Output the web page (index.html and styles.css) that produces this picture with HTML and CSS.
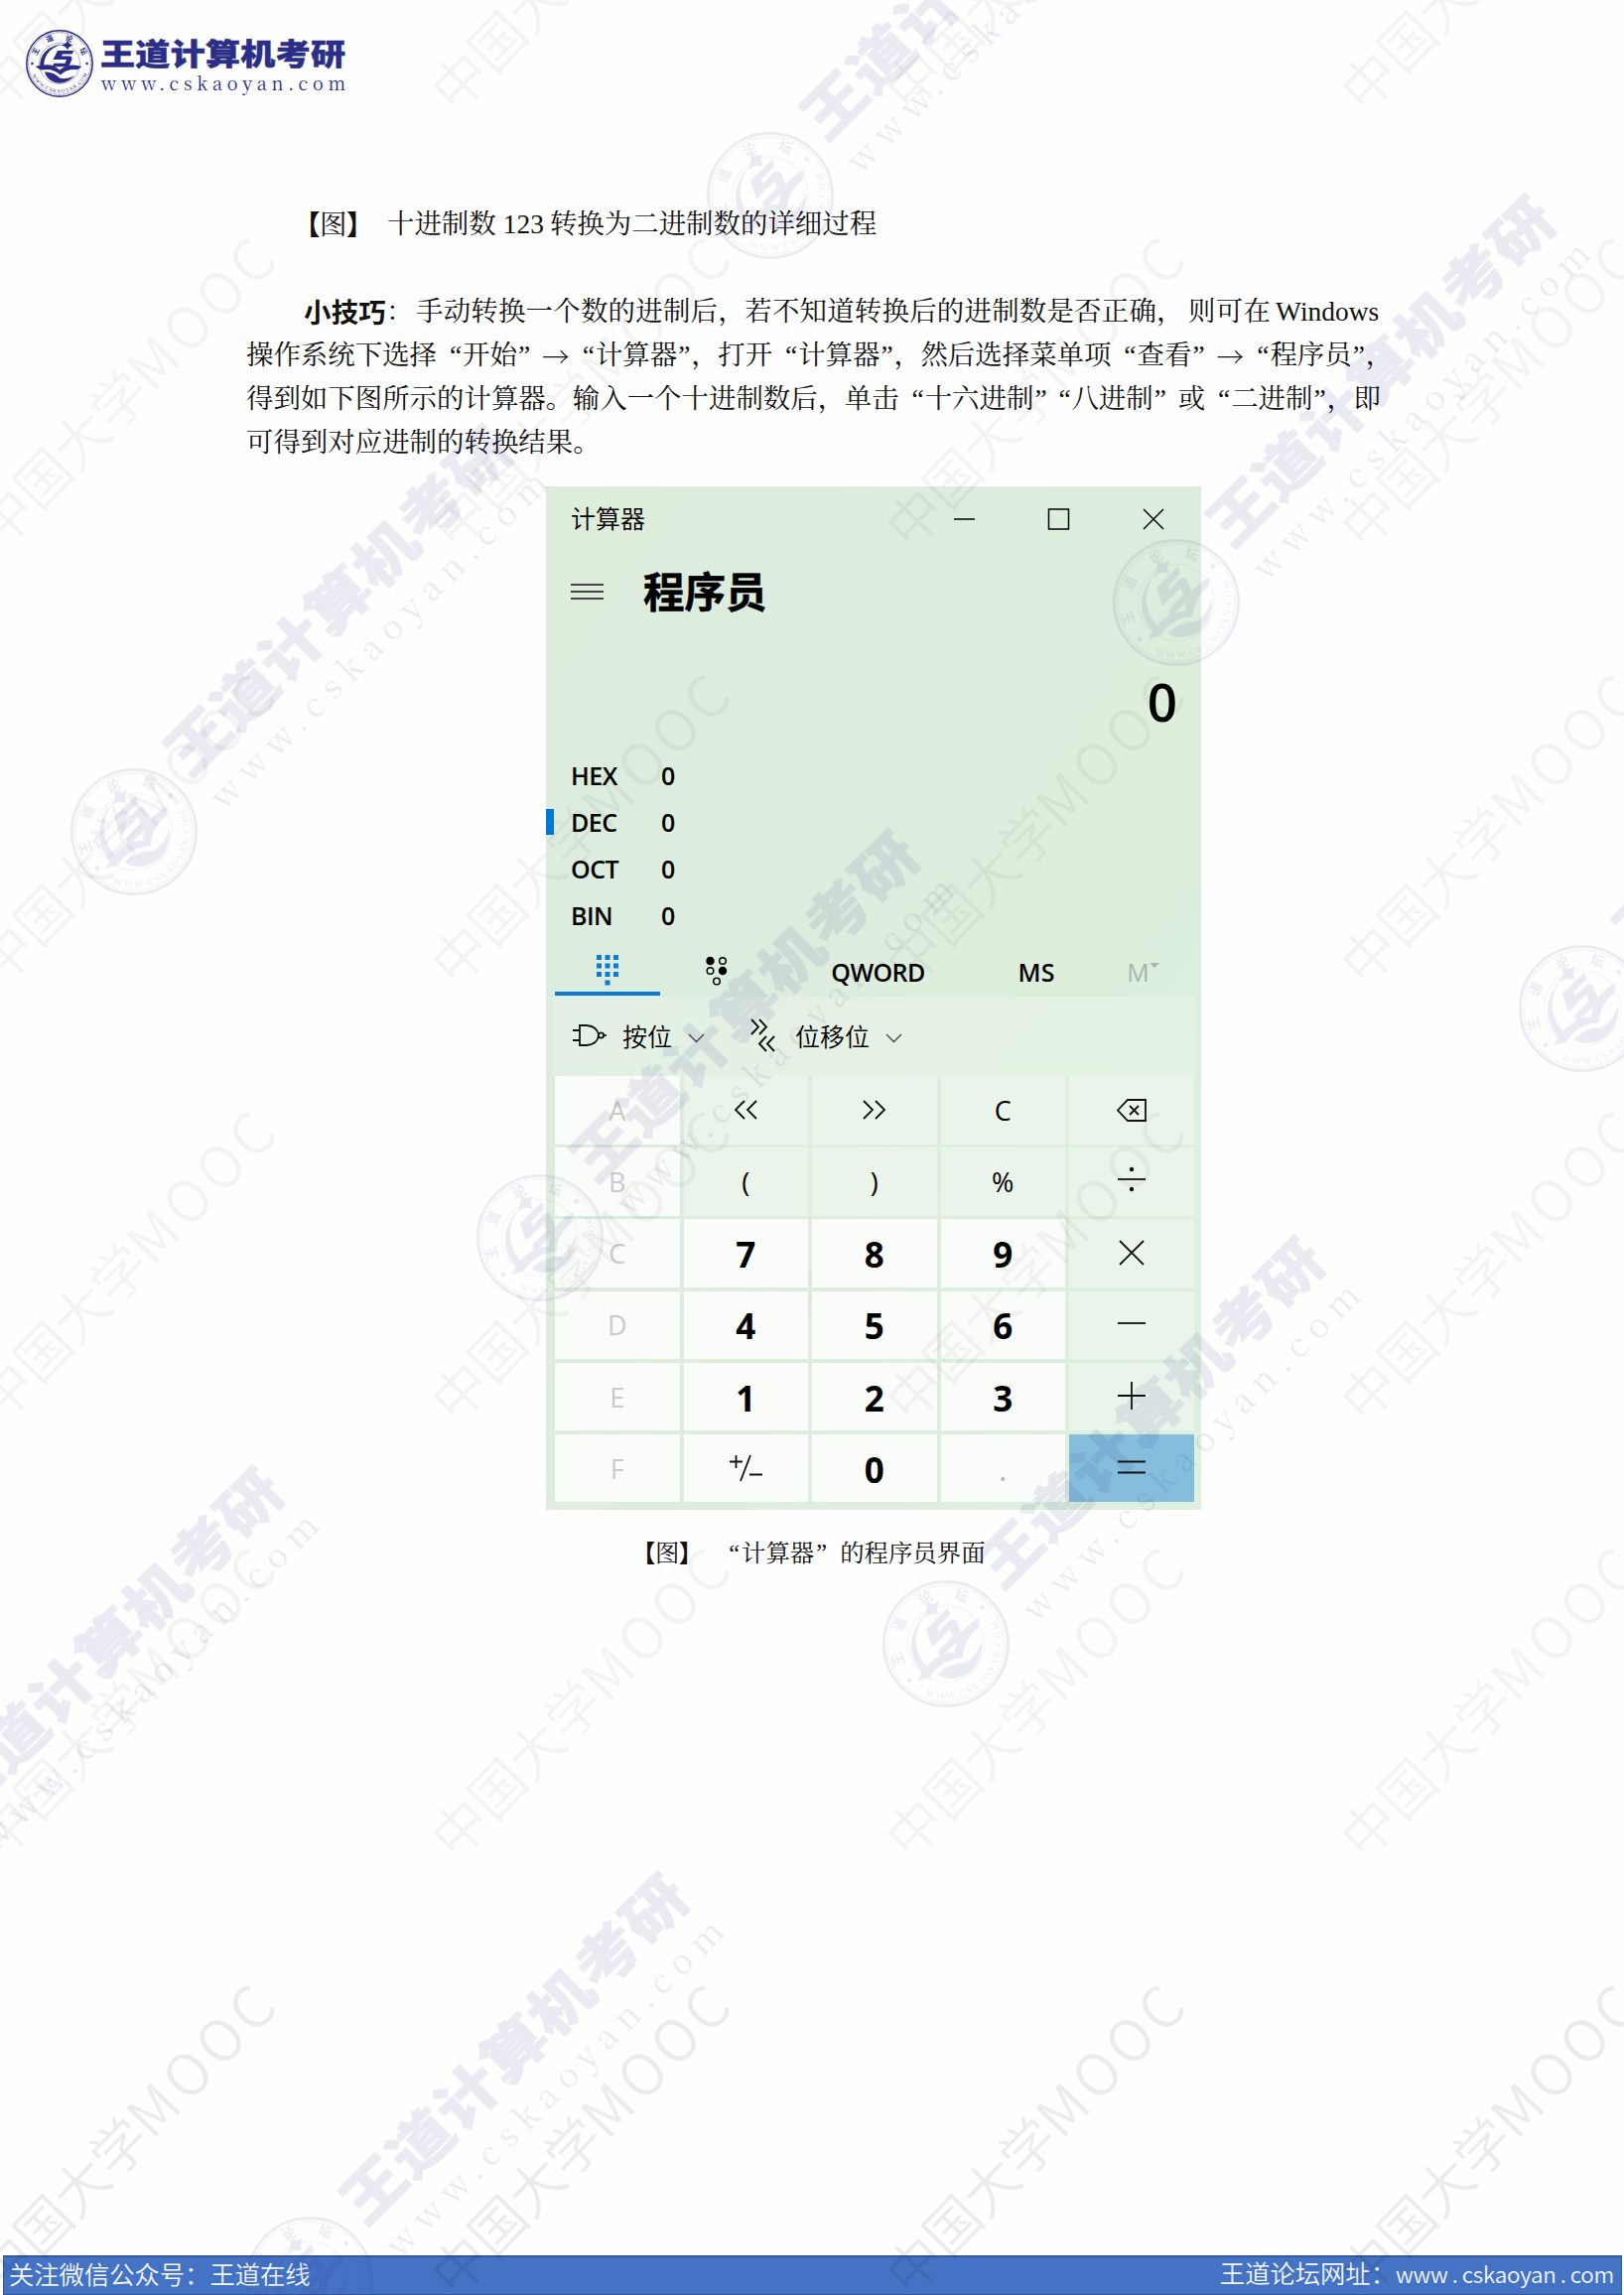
FILE: index.html
```html
<!DOCTYPE html>
<html lang="zh-CN">
<head>
<meta charset="utf-8">
<title>王道计算机考研</title>
<link rel="stylesheet" href="styles.css">
</head>
<body>
<div class="page">
  <header class="brand">
    <svg width="340" height="80" viewBox="-40 -40 340 80" aria-label="王道计算机考研">
      <defs>
        <path id="rim" d="M-29.5 5A30 30 0 0 0 29.5 5"/>
        <g id="logo" fill="#2b2e86">
          <circle r="33.2" fill="none" stroke="#2b2e86" stroke-width="1.5"/>
          <circle r="31.3" fill="none" stroke="#2b2e86" stroke-width=".9" stroke-dasharray=".6 .7"/>
          <circle r="20.5" fill="none" stroke="#2b2e86" stroke-width=".35"/>
          <circle cx="-27.6" r="1.3"/><circle cx="27.6" r="1.3"/>
          <path d="M8-23.500Q9-19.500 13.500-18.500Q9-17.500 8-13.500Q7-17.500 1-18.500Q7-19.500 8-23.500Z"/>
          <path d="M2-19C-13-18-21-7-19.5 4L-15.500 5C-17-6-11-16 2-19Z"/>
          <path d="M-2-13H14.500L12.500-9.500H3L1.800-7.500H9.500Q13.500-7.500 12.300-4L10.500 .5Q9.500 3.300 6 3.300H-7.500L-5.500-.3H5.500L7-4H-6.500Z"/>
          <path d="M-24.500 3Q-8-2 0 6.500Q9-1.500 22.500 3L18 6.200Q8 5 1 11.500Q-7 4-19 6.500Z"/>
          <path d="M-15 8.500Q-6 8 0 14.500Q6 16.500 15 12.500Q6 22-5 19Q-13 16-15 8.500Z"/>
          <g class="rim-text" text-anchor="middle">
            <text transform="rotate(-63) translate(0 -24.300)">王</text>
            <text transform="rotate(-22) translate(0 -24.300)">道</text>
            <text transform="rotate(21) translate(0 -24.300)">论</text>
            <text transform="rotate(63) translate(0 -24.300)">坛</text>
          </g>
          <text class="rim-url"><textPath href="#rim" startOffset="7" textLength="70">WWW.CSKAOYAN.COM</textPath></text>
          <text class="logo-name" transform="translate(41 1.200) scale(1 .86)" textLength="247" stroke="#2b2e86" stroke-width=".6">王道计算机考研</text>
          <text class="logo-url" x="42" y="26.500" textLength="246">www.cskaoyan.com</text>
        </g>
        <text id="mooc" class="mooc" x="-27" y="20"><tspan>中国大学</tspan><tspan class="latin">MOOC</tspan></text>
      </defs>
      <use href="#logo"/>
    </svg>
  </header>

  <main>
    <h1 class="figure-title"><span class="tag"><b>【</b>图<b>】</b></span><span class="gap-a">十进制数</span><span class="num">123</span><span>转换为二进制数的详细过程</span></h1>

    <div class="tip">
      <p class="line first"><b>小技巧</b><i class="wide">：</i>手动转换一个数的进制后<i>，</i>若不知道转换后的进制数是否正确<i class="loose">，</i>则可在<span class="win">Windows</span></p>
      <p class="line">操作系统下选择<i class="lq">“</i>开始<i class="rq">”</i><i class="arrow">→</i><i class="lq">“</i>计算器<i class="rq near">”</i><i>，</i>打开<i class="lq slim">“</i>计算器<i class="rq near">”</i><i>，</i>然后选择菜单项<i class="lq">“</i>查看<i class="rq">”</i><i class="arrow">→</i><i class="lq">“</i>程序员<i class="rq near">”</i>，</p>
      <p class="line">得到如下图所示的计算器<i>。</i>输入一个十进制数后<i>，</i>单击<i class="lq">“</i>十六进制<i class="rq">”</i><i class="lq slim2">“</i>八进制<i class="rq">”</i>或<i class="lq">“</i>二进制<i class="rq near">”</i><i>，</i>即</p>
      <p class="line">可得到对应进制的转换结果。</p>
    </div>

    <section class="calc">
      <div class="titlebar">
        <span>计算器</span>
        <svg width="212" height="22" viewBox="0 0 212 22" fill="none" stroke="#000" stroke-width="1.500"><path d="M0 11H21M191 1L211 21M211 1L191 21"/><rect x="95.500" y="1" width="20" height="20"/></svg>
      </div>
      <div class="mode">
        <svg width="33" height="18" viewBox="0 0 33 18" stroke="#111" stroke-width="1.600"><path d="M0 2H33M0 9H33M0 16H33"/></svg>
        <h2>程序员</h2>
      </div>
      <output class="display">0</output>
      <dl class="bases">
        <div><dt>HEX</dt><dd>0</dd></div>
        <div class="active"><dt>DEC</dt><dd>0</dd></div>
        <div><dt>OCT</dt><dd>0</dd></div>
        <div><dt>BIN</dt><dd>0</dd></div>
      </dl>
      <div class="tabs">
        <div class="tab on"><svg width="22" height="31" viewBox="0 0 22 31" fill="#0a7ad6"><path d="M0 0h5v5H0zM8.500 0h5v5h-5zM17 0h5v5h-5zM0 8.500h5v5H0zM8.500 8.500h5v5h-5zM17 8.500h5v5h-5zM0 17h5v5H0zM8.500 17h5v5h-5zM17 17h5v5h-5zM8.500 25.500h5v5h-5z"/></svg></div>
        <div class="tab"><svg width="22" height="31" viewBox="0 0 22 31" fill="none" stroke="#000" stroke-width="1.500"><circle cx="4.500" cy="5" r="3.500" fill="#000"/><circle cx="17" cy="5" r="3.300"/><circle cx="4.500" cy="15" r="3.300"/><circle cx="17" cy="15" r="3.500" fill="#000"/><circle cx="11" cy="25.500" r="3.300"/></svg></div>
        <div class="tab word">QWORD</div>
        <div class="tab ms">MS</div>
        <div class="tab mem">M<svg width="10" height="6" viewBox="0 0 10 6"><path d="M0 0H10L5 5Z" fill="#a9b5a8"/></svg></div>
      </div>
      <div class="panel">
        <div class="tools">
          <svg class="gate" width="34" height="22" viewBox="0 0 34 22" fill="none" stroke="#111" stroke-width="1.800"><path d="M7 1H14Q25 2 26 11Q25 20 14 21H7ZM0 6H7M0 16H7"/><circle cx="28.500" cy="11" r="2.600"/><path d="M31 11H34"/></svg>
          <span class="bit">按位</span>
          <svg class="chev" width="17" height="10" viewBox="0 0 17 10" fill="none" stroke="#444" stroke-width="1.300"><path d="M1 1L8.500 8.500L16 1"/></svg>
          <svg class="shift" width="25" height="34" viewBox="0 0 25 34" fill="none" stroke="#111" stroke-width="1.900"><path d="M1 1L8 8.500L1 16M9 1L16 8.500L9 16M16 18L9 25.500L16 33M24 18L17 25.500L24 33"/></svg>
          <span class="move">位移位</span>
          <svg class="chev" width="17" height="10" viewBox="0 0 17 10" fill="none" stroke="#444" stroke-width="1.300"><path d="M1 1L8.500 8.500L16 1"/></svg>
        </div>
        <div class="keys">
          <div class="key hex">A</div>
          <div class="key op"><svg width="25" height="20" viewBox="0 0 25 20"><path d="M11 1L2 10L11 19M23 1L14 10L23 19"/></svg></div>
          <div class="key op"><svg width="25" height="20" viewBox="0 0 25 20"><path d="M2 1L11 10L2 19M14 1L23 10L14 19"/></svg></div>
          <div class="key op txt">C</div>
          <div class="key op"><svg width="30" height="23" viewBox="0 0 30 23"><path d="M11 1H29V22H11L1 11.500ZM13 7L22 16M22 7L13 16"/></svg></div>

          <div class="key hex">B</div>
          <div class="key op txt">(</div>
          <div class="key op txt">)</div>
          <div class="key op txt">%</div>
          <div class="key op up"><svg width="28" height="28" viewBox="0 0 28 28"><path d="M0 14H28"/><circle cx="14" cy="4" r="1.300" fill="#111"/><circle cx="14" cy="24" r="1.300" fill="#111"/></svg></div>

          <div class="key hex">C</div><div class="key digit">7</div><div class="key digit">8</div><div class="key digit">9</div>
          <div class="key op up2"><svg width="26" height="26" viewBox="0 0 26 26"><path d="M1 1L25 25M25 1L1 25"/></svg></div>

          <div class="key hex">D</div><div class="key digit">4</div><div class="key digit">5</div><div class="key digit">6</div>
          <div class="key op up"><svg width="28" height="28" viewBox="0 0 28 28"><path d="M0 14H28"/></svg></div>

          <div class="key hex">E</div><div class="key digit">1</div><div class="key digit">2</div><div class="key digit">3</div>
          <div class="key op up2"><svg width="28" height="28" viewBox="0 0 28 28"><path d="M0 14H28M14 0V28"/></svg></div>

          <div class="key hex">F</div>
          <div class="key"><svg width="34" height="28" viewBox="0 0 34 28"><path d="M1 7.500H14M7.500 1V14M22 1L12 27M21 20.500H34"/></svg></div>
          <div class="key digit">0</div>
          <div class="key dot">.</div>
          <div class="key equals up2"><svg width="28" height="14" viewBox="0 0 28 14"><path d="M0 1.500H28M0 12.500H28"/></svg></div>
        </div>
      </div>
    </section>

    <p class="caption"><span class="tag"><b>【</b>图<b>】</b></span><i class="cl">“</i>计算器<i class="cr">”</i>的程序员界面</p>
  </main>

  <footer>
    <span>关注微信公众号：王道在线</span>
    <span class="site">王道论坛网址：<span class="url">www<i>.</i>cskaoyan<i>.</i>com</span></span>
  </footer>

  <svg class="watermarks" width="1636" height="2312" viewBox="0 0 1636 2312" aria-hidden="true">
    <g opacity=".095">
      <use href="#logo" transform="translate(776 197) rotate(-45) scale(1.885)"/>
      <use href="#logo" transform="translate(135 838) rotate(-45) scale(1.885)"/>
      <use href="#logo" transform="translate(1185 607) rotate(-45) scale(1.885)"/>
      <use href="#logo" transform="translate(544 1247) rotate(-45) scale(1.885)"/>
      <use href="#logo" transform="translate(1594 1016) rotate(-45) scale(1.885)"/>
      <use href="#logo" transform="translate(953 1656) rotate(-45) scale(1.885)"/>
      <use href="#logo" transform="translate(-96 1888) rotate(-45) scale(1.885)"/>
      <use href="#logo" transform="translate(312 2297) rotate(-45) scale(1.885)"/>
    </g>
    <g id="grid" opacity=".045">
      <g id="row">
        <use href="#mooc" transform="translate(5 82) rotate(-46)"/>
        <use href="#mooc" transform="translate(463 82) rotate(-46)"/>
        <use href="#mooc" transform="translate(921 82) rotate(-46)"/>
        <use href="#mooc" transform="translate(1379 82) rotate(-46)"/>
      </g>
      <use href="#row" y="440"/><use href="#row" y="880"/><use href="#row" y="1320"/><use href="#row" y="1760"/>
    </g>
    <use href="#row" y="2200" opacity=".075"/>
  </svg>
</div>
</body>
</html>
```
FILE: styles.css
```css
* { box-sizing: border-box; }
body { margin: 0; background: #fefefe; }
i { font-style: normal; }
.page {
  position: relative;
  width: 1636px;
  height: 2312px;
  overflow: hidden;
  display: flex;
  flex-direction: column;
  color: #111;
  font-family: "Liberation Serif", "Noto Serif CJK SC", "Noto Sans CJK SC", serif;
}
.brand { height: 204px; padding: 24px 0 0 20px; flex: none; }
.brand svg { display: block; overflow: visible; }
.rim-text { font: 700 7.300px "Noto Sans CJK SC", sans-serif; }
.rim-url { font: 5.200px "Liberation Serif", serif; }
.logo-name { font: 900 35px "Noto Sans CJK SC", sans-serif; }
.logo-url { font: 18px "Noto Serif CJK SC", "Liberation Serif", serif; }
.mooc { font: 350 55px "Noto Sans CJK SC", sans-serif; }
.mooc .latin { font-size: 58px; letter-spacing: 5px; }

main { flex: 1; }
.figure-title, .line { margin: 0; font-weight: 400; font-size: 27.450px; line-height: 44px; white-space: nowrap; }
.figure-title { display: flex; height: 44px; padding-left: 295px; }
.tag { width: 95px; margin-top: -2px; }
.tag b { font-family: "Noto Sans CJK SC", sans-serif; }
.figure-title .tag { letter-spacing: -.5px; }
.num { margin: 0 6px 0 7px; }
.tip { padding: 44px 0 0 248px; }
.line { display: flex; height: 44px; }
.line.first { padding-left: 58px; letter-spacing: .22px; }
.line b { font-family: "Noto Sans CJK SC", sans-serif; margin-top: -1px; }
.line i { width: 27px; }
.line i.wide { width: 30px; }
.line i.loose { width: 32px; }
.line i.lq { width: 26px; text-align: right; padding-right: 1px; }
.line i.slim { width: 26px; }
.line i.slim2 { width: 13px; }
.line i.rq { width: 25px; padding-left: 1px; }
.line i.near { width: 14px; }
.line i.arrow { width: 28px; font-family: "Noto Serif CJK SC", serif; line-height: 44px; height: 44px; }
.line .win { margin-left: 5px; letter-spacing: 0; }

.calc {
  width: 660px;
  height: 1031px;
  margin: 22px 0 0 550px;
  display: flex;
  flex-direction: column;
  background: linear-gradient(125deg, #deeddb 0%, #dcecde 30%, #deeddc 55%, #dceedd 70%, #dff0de 100%);
  color: #000;
  font-family: "Open Sans", "Noto Sans CJK SC", sans-serif;
}
.titlebar { height: 66px; padding: 0 37px 0 25px; display: flex; justify-content: space-between; align-items: center; font-size: 25px; }
.titlebar span { font-family: "Noto Sans CJK SC", sans-serif; font-weight: 350; padding-bottom: 4px; }
.mode { height: 80px; padding-left: 25px; display: flex; align-items: center; gap: 40px; }
.mode h2 { margin: 0; padding-bottom: 5px; font: 700 41.500px/60px "Noto Sans CJK SC", sans-serif; -webkit-text-stroke: .6px #000; }
.display { height: 121px; padding: 0 24px 0 0; text-align: right; font-weight: 600; font-size: 53px; line-height: 142px; }
.bases { margin: 0; height: 188px; font-size: 25px; font-weight: 600; letter-spacing: -.5px; }
.bases div { height: 47px; display: flex; align-items: center; padding-left: 25px; }
.bases dt { width: 91px; }
.bases dd { margin: 0; }
.bases .active { background: linear-gradient(#0078d7, #0078d7) 0 50% / 8px 26px no-repeat; }
.tabs { height: 59px; display: flex; align-items: flex-end; padding: 0 0 1px 9px; font-size: 25px; font-weight: 600; }
.tab { width: 106px; height: 47px; display: flex; align-items: center; justify-content: center; padding-bottom: 1px; }
.tab.on { border-bottom: 4px solid #0a7ad6; padding-bottom: 0; }
.tab:nth-child(2) { width: 113px; }
.tab:nth-child(2) svg { margin-bottom: 1px; }
.tab.word { width: 213px; letter-spacing: -.6px; }
.tab.ms { width: 106px; }
.tab.mem { width: 108px; color: #a9b5a8; font-weight: 400; padding-left: 1px; }
.tab.mem svg { margin-bottom: 13px; }
.panel { flex: 1; margin: 0 6px 0 7px; background: linear-gradient(rgba(255, 255, 255, .22) 80px, rgba(255, 255, 255, 0) 80px); }
.tools { height: 80px; display: flex; align-items: center; padding: 0 0 2px 20px; font: 350 25px "Noto Sans CJK SC", sans-serif; }
.chev { margin-top: 6px; }
.bit { margin: 0 16px; }
.tools .shift { margin: 0 20px 0 46px; }
.move { margin-right: 16px; }
.keys {
  display: grid;
  grid-template-columns: repeat(5, 125.500px);
  grid-auto-rows: 68.500px;
  gap: 3.700px 4px;
  padding-left: 2px;
}
.key { display: flex; align-items: center; justify-content: center; background: #fafcf9; }
.key svg { fill: none; stroke: #111; stroke-width: 1.800; }
.key.op { background: #eaf4ea; }
.key.txt { font-size: 27px; }
.key.hex { color: #c8cbc8; font-size: 27px; }
.key.digit { font-weight: 700; font-size: 35px; padding-top: 2px; }
.key.dot { color: #b5b8b5; font-size: 32px; }
.key.up { padding-bottom: 4px; }
.key.up2 { padding-bottom: 2px; }
.key.equals { background: #84bedc; }

.caption { margin: 22px 0 0 636px; display: flex; font-size: 24.400px; line-height: 44px; white-space: nowrap; }
.caption .tag { width: 85px; letter-spacing: -.5px; }
.caption i { width: 26px; }
.caption .cl { text-align: right; padding-right: 2px; }
.caption .cr { padding-left: 2px; width: 26px; }

footer {
  flex: none;
  height: 40px;
  margin: 0 2px 0 3px;
  padding: 0 7px 5px 5px;
  display: flex;
  justify-content: space-between;
  align-items: center;
  background: #4472c4;
  border: 1px solid #35599b;
  border-top-width: 2px;
  color: #f2f6ff;
  font: 350 25.300px/32px "Noto Sans CJK SC", sans-serif;
}
.site { display: flex; }
.url { font-size: 22.500px; line-height: 34px; letter-spacing: -.25px; }
.url i { display: inline-block; width: 14px; text-align: center; }
.watermarks { position: absolute; left: 0; top: 0; pointer-events: none; }
```
